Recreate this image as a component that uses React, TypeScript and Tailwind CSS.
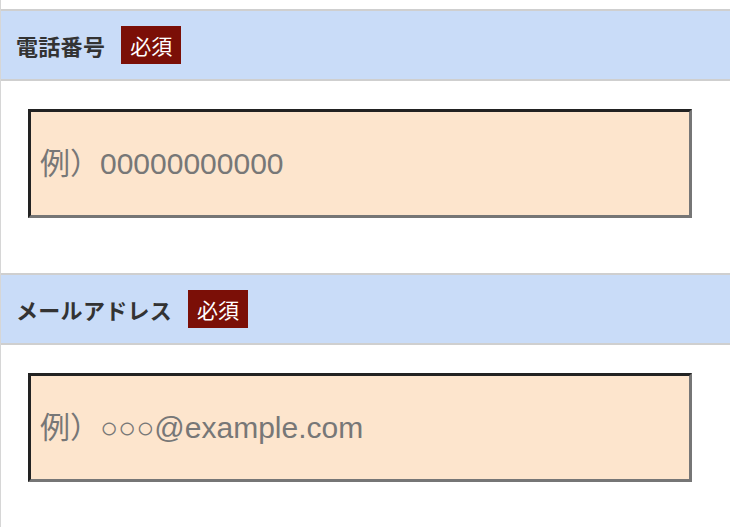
import React from "react";

function Field({ label, placeholder }: { label: string; placeholder: string }) {
  return (
    <div className="h-[264px]">
      <div className="flex h-[72px] items-center gap-4 border-y-2 border-[#cfcfcf] bg-[#c9dcf8] pl-[15px]">
        <span className="text-[22px] font-bold leading-none tracking-[0.3px] text-[#333]">{label}</span>
        <span className="flex h-[38px] w-[60px] items-center justify-center bg-[#7b0f07] text-[21px] leading-none text-white">
          必須
        </span>
      </div>
      <div className="pl-[27px] pt-[28px]">
        <input
          type="text"
          placeholder={placeholder}
          className="box-border block h-[109px] w-[664px] border-[3px] border-t-[#222] border-l-[#222] border-r-[#767676] border-b-[#767676] bg-[#fde5cd] pl-[9px] text-[30px] text-[#333] outline-none placeholder:text-[#777]"
          style={{ fontFamily: '"Liberation Sans", Arial, "Noto Sans CJK JP", sans-serif' }}
        />
      </div>
    </div>
  );
}

export default function App() {
  return (
    <div
      className="min-h-[527px] w-[730px] border-l border-[#d6d6d6] bg-white pt-[9px]"
      style={{ fontFamily: '"Noto Sans CJK JP", "Noto Sans", sans-serif' }}
    >
      <Field label="電話番号" placeholder="例）00000000000" />
      <Field label="メールアドレス" placeholder="例）○○○@example.com" />
    </div>
  );
}
